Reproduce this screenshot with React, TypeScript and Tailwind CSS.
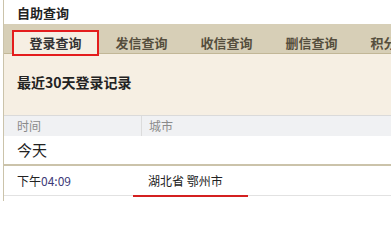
const font = "font-['SimSun','Noto_Sans_CJK_SC','Liberation_Sans',sans-serif]";

const tabs = ["登录查询", "发信查询", "收信查询", "删信查询", "积分查询"];

export default function App() {
  return (
    <div className={`w-[391px] h-[201px] overflow-hidden bg-white pl-[3px] ${font}`}>
      <div className="h-full border-l border-[#cbc3aa] flex flex-col">
        {/* title */}
        <div className="h-[24px] pl-[13px] flex items-center text-[13px] font-bold leading-none text-[#222]">
          自助查询
        </div>

        {/* tab bar */}
        <div className="h-[30px] shrink-0 bg-[#d7cfb7] border-b border-[#c2b797] flex pl-[8px] whitespace-nowrap">
          {tabs.map((t, i) =>
            i === 0 ? (
              <div
                key={t}
                className="relative z-10 mt-[6px] h-[26px] w-[87px] shrink-0 border-2 border-[#e41d1d] bg-[#f6efe3] flex items-center justify-center text-[13px] font-bold text-[#333]"
              >
                {t}
              </div>
            ) : (
              <div
                key={t}
                className="mt-[6px] h-[26px] w-[85px] shrink-0 flex items-center justify-center text-[13px] font-bold text-[#554e3d]"
              >
                {t}
              </div>
            )
          )}
        </div>

        {/* section heading */}
        <div className="h-[61px] shrink-0 bg-[#f6efe3] pl-[13px] pt-[19px]">
          <div className="text-[14px] font-bold leading-[18px] text-[#222]">最近30天登录记录</div>
        </div>

        {/* table header */}
        <div className="h-[21px] shrink-0 bg-[#f0f1f3] border-t border-[#dadada] flex text-[12px] text-[#8a8a8a]">
          <div className="w-[138px] pl-[13px] border-r border-[#dcdcdc] flex items-center">时间</div>
          <div className="pl-[7px] flex items-center">城市</div>
        </div>

        {/* group row */}
        <div className="h-[30px] shrink-0 pl-[13px] flex items-center text-[15px] text-[#222] border-b-2 border-[#cbc3aa]">
          今天
        </div>

        {/* data row */}
        <div className="h-[29px] shrink-0 flex items-center text-[12px] text-[#222]">
          <div className="w-[131px] pl-[13px]">
            下午<span className="text-[#3d3a78]">04:09</span>
          </div>
          <div className="pl-[13px]">湖北省 鄂州市</div>
        </div>
        <div className="h-[2px] shrink-0 flex">
          <div className="w-[129px] h-px bg-[#e2e2e2]" />
          <div className="w-[115px] h-[2px] bg-[#d42020]" />
          <div className="flex-1 h-px bg-[#e2e2e2]" />
        </div>
      </div>
    </div>
  );
}
